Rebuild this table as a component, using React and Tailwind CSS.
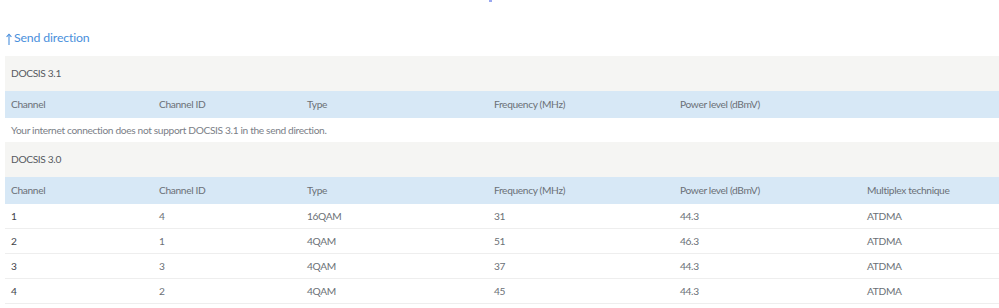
import React from "react";

const cols = "grid grid-cols-[148px_148px_187px_186px_187px_1fr]";
const headers = ["Channel", "Channel ID", "Type", "Frequency (MHz)", "Power level (dBmV)"];
const rows = [
  ["1", "4", "16QAM", "31", "44.3", "ATDMA"],
  ["2", "1", "4QAM", "51", "46.3", "ATDMA"],
  ["3", "3", "4QAM", "37", "44.3", "ATDMA"],
  ["4", "2", "4QAM", "45", "44.3", "ATDMA"],
];

function HeaderRow({ items }) {
  return (
    <div className={`${cols} h-[27px] items-center pt-[1px] bg-[#d7e8f6] text-[#6b7076]`}>
      {items.map((h, i) => (
        <div key={i} className="pl-[6px]">{h}</div>
      ))}
    </div>
  );
}

export default function App() {
  return (
    <div className="relative w-[999px] h-[308px] bg-white overflow-hidden text-[10.2px] tracking-[-0.35px]" style={{ fontFamily: 'Lato, "Liberation Sans", sans-serif' }}>
      <div className="absolute left-[489px] top-0 w-[3px] h-[2px] bg-[#9aa8f0]" />
      <div className="pt-[27px] pl-[5px]">
        <div className="h-[22px] flex items-center text-[#4a8fdc] tracking-normal">
          <svg width="6" height="12" viewBox="0 0 6 12" className="ml-[0.5px] mt-[2px]" fill="none" stroke="#4a8fdc" strokeWidth="1.1">
            <path d="M3 1.2V12" />
            <path d="M0.6 3.8L3 1.2L5.4 3.8" />
          </svg>
          <span className="text-[12.3px] leading-[20px] ml-[2.5px] tracking-[-0.15px]">Send direction</span>
        </div>
        <div className="mt-[7px]">
          <div className="h-[35px] flex items-center pt-[1px] pl-[6px] bg-[#f5f5f3] text-[#555a5f]">DOCSIS 3.1</div>
          <HeaderRow items={headers} />
          <div className="h-[24px] flex items-center pt-[1px] pl-[6px] bg-white text-[#7b8087]">
            Your internet connection does not support DOCSIS 3.1 in the send direction.
          </div>
          <div className="h-[35px] flex items-center pt-[1px] pl-[6px] bg-[#f5f5f3] text-[#555a5f]">DOCSIS 3.0</div>
          <HeaderRow items={[...headers, "Multiplex technique"]} />
          {rows.map((r, ri) => (
            <div key={ri} className={`${cols} h-[25px] items-center pt-[1px] border-b border-[#eeeeee] text-[#6b7076]`}>
              {r.map((c, ci) => (
                <div key={ci} className={`pl-[6px] ${ci === 0 ? "text-[#3f4449]" : ""}`}>{c}</div>
              ))}
            </div>
          ))}
        </div>
      </div>
    </div>
  );
}
